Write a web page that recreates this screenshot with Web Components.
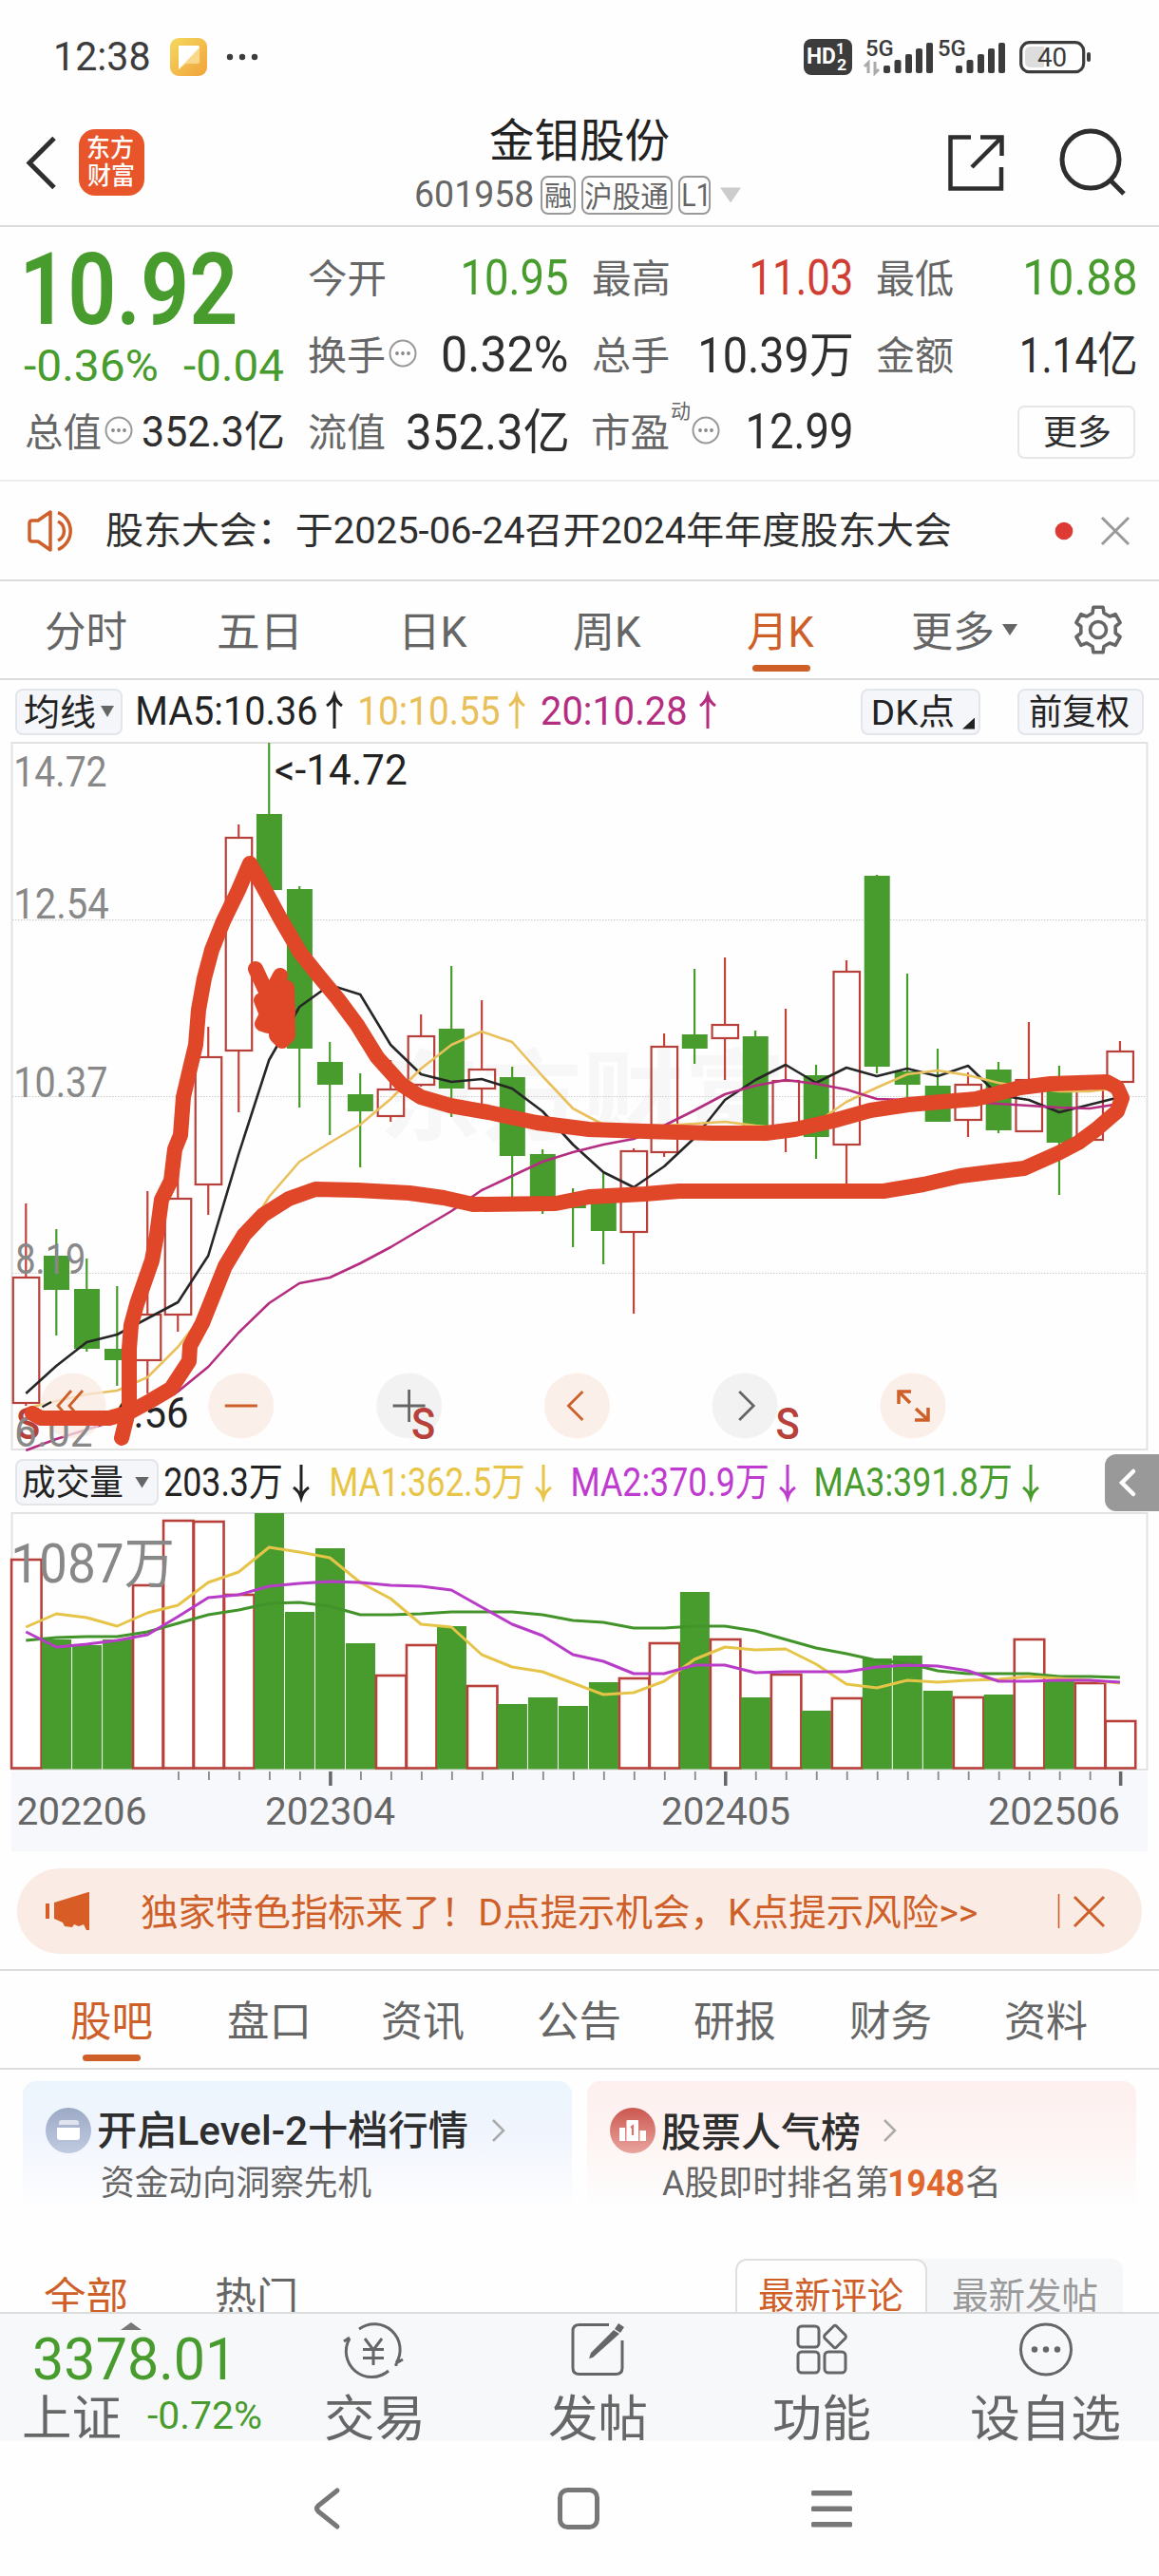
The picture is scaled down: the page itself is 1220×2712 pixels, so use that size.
<!DOCTYPE html>
<html lang="zh-CN">
<head>
<meta charset="utf-8">
<title>金钼股份 601958</title>
<style>
html,body{margin:0;padding:0;background:#fefefe}
body{width:1220px;height:2712px;overflow:hidden;font-family:Roboto,"Noto Sans CJK SC",sans-serif;color:#2e2e2e}
</style>
</head>
<body>
<stock-page></stock-page>
<script>
const FAMILY = 'Roboto,"Noto Sans CJK SC",sans-serif';
const GREEN = '#479c2d', RED = '#b8403a', ORANGE = '#cf5f28', PEN = '#e04628';
const pen = document.createElement('canvas').getContext('2d');

/* Ink extents of a string, and the horizontal scale that makes it w pixels wide. */
function fit(text, size, weight, w) {
  pen.font = `${weight} ${size}px ${FAMILY}`;
  const m = pen.measureText(text);
  const ink = m.actualBoundingBoxLeft + m.actualBoundingBoxRight;
  const s = w ? w / ink : 1;
  return { s, dx: m.actualBoundingBoxLeft * s, w: w || ink };
}
function svgText(text, x, base, size, w, fill, weight = 400) {
  const f = fit(text, size, weight, w);
  return `<text transform="translate(${x + f.dx} ${base}) scale(${f.s} 1)" font-size="${size}" font-weight="${weight}" fill="${fill}">${text.replace(/</g, '&lt;')}</text>`;
}
function define(name, css, html) {
  customElements.define(name, class extends HTMLElement {
    connectedCallback() {
      if (this.shadowRoot) return;
      const root = this.attachShadow({ mode: 'open' });
      root.innerHTML = `<style>:host{display:block;box-sizing:border-box}*{box-sizing:border-box}svg{display:block;flex:none;overflow:visible}${css}</style>` + (typeof html === 'function' ? html(this) : html);
    }
  });
}

/* Text condensed to a set width: w, size, weight, m (left margin), c (colour).
   Han glyphs sit a little high on the Roboto baseline box, so they are nudged down. */
customElements.define('fit-text', class extends HTMLElement {
  connectedCallback() {
    if (this.shadowRoot) return;
    const a = n => this.getAttribute(n);
    const size = +a('size'), weight = a('weight') || 400, text = this.textContent;
    const f = fit(text, size, weight, +a('w'));
    const drop = !/[\u4e00-\u9fff]/.test(text) ? 0 : /\d/.test(text) ? .02 : .06;
    this.attachShadow({ mode: 'open' }).innerHTML = `<style>
      :host{display:block;flex:none;white-space:nowrap;width:${f.w}px;height:${size * 1.2}px;line-height:${size * 1.2}px;
        font-size:${size}px;font-weight:${weight};margin-left:${a('m') || 0}px;${a('c') ? 'color:' + a('c') : ''}}
      span{display:inline-block;transform-origin:0 50%;transform:translate(${f.dx}px,${drop}em) scaleX(${f.s})}
    </style><span><slot></slot></span>`;
  }
});

define('info-dot', ':host{flex:none;width:30px;height:30px}', `<svg width="30" height="30" fill="none" stroke="#999" stroke-width="2"><circle cx="15" cy="15" r="13.5"/><g fill="#888" stroke="none"><circle cx="9" cy="15" r="1.9"/><circle cx="15" cy="15" r="1.9"/><circle cx="21" cy="15" r="1.9"/></g></svg>`);

define('tri-down', ':host{flex:none;width:var(--tw,14px);height:var(--th,12px);background:var(--tc,#666);clip-path:polygon(0 0,100% 0,50% 100%)}', '');

define('ma-arrow', ':host{flex:none}', el => {
  const up = el.hasAttribute('up');
  return `<svg width="20" height="38" fill="none" stroke="currentColor" stroke-width="3" ${up ? '' : 'style="transform:rotate(180deg)"'}><path d="M10 37V3M2 13Q8 9 10 2Q12 9 18 13"/></svg>`;
});

const bars = () => [[0, 8], [11.5, 14], [23, 20], [34, 26], [45, 32]].map(([x, h]) => `<rect x="${x}" y="${32 - h}" width="7" height="${h}" rx="2"/>`).join('');
define('status-bar', `:host{height:100px;padding:20px 71px 0 59px;display:flex;align-items:center;color:#3c3c3c}
  .gap{flex:1}.note{margin-left:22px}.hd{width:51px;height:38px;border-radius:8px;background:#3c3c3c;color:#fff;display:flex;align-items:center;padding-left:4px}
  .hd div{display:flex;flex-direction:column;margin-left:2px}`,
  `<fit-text w="98" size="42">12:38</fit-text>
  <svg class="note" width="40" height="40"><defs><linearGradient id="g" x2="1" y2="1"><stop offset="0" stop-color="#f4da5c"/><stop offset="1" stop-color="#f0a23c"/></linearGradient></defs><rect width="39" height="40" rx="9" fill="url(#g)"/><path d="M9 8H29Q31 8 31 10V25Q31 27 29 27H17L9 33Z" fill="#f9d88c"/><path d="M9 8H29Q31 8 31 10L9 33Z" fill="#fff"/></svg>
  <svg style="margin-left:18px" width="38" height="8" fill="#3c3c3c"><circle cx="5" cy="4" r="3.2"/><circle cx="18" cy="4" r="3.2"/><circle cx="31" cy="4" r="3.2"/></svg>
  <span class="gap"></span>
  <div class="hd"><fit-text w="29" size="23" weight="700">HD</fit-text><div><fit-text w="6" size="16" weight="700">1</fit-text><fit-text w="10" size="16" weight="700" style="margin-top:-3px">2</fit-text></div></div>
  <svg style="margin-left:13px" width="147" height="38" fill="#3c3c3c" font-family="Roboto" font-weight="500">
    ${svgText('5G', 2, 18, 23, 28, '#3c3c3c', 500)}${svgText('5G', 78, 18, 23, 28, '#3c3c3c', 500)}
    <g transform="translate(20 4)">${bars()}</g><g transform="translate(96 4)">${bars()}</g>
    <path d="M4 36V25L0 29M11 24V36L15 32" fill="none" stroke="#aaa" stroke-width="3"/></svg>
  <svg style="margin-left:16px" width="76" height="36"><rect x="1.7" y="2.7" width="66" height="31" rx="9" fill="none" stroke="#3c3c3c" stroke-width="3.2"/><path d="M12 7H26V29H12Q6 29 6 23V13Q6 7 12 7Z" fill="#ddd"/><rect x="71" y="13" width="4" height="10" rx="2" fill="#3c3c3c"/><g font-family="Roboto">${svgText('40', 19, 28, 27, 30, '#3c3c3c')}</g></svg>`);

define('boxed-tag', ':host{flex:none;height:41px;border:2px solid #999;border-radius:8px;display:flex;align-items:center;justify-content:center;width:var(--w);margin-left:6px;color:#666}', '<slot></slot>');

define('title-bar', `:host{height:139px;border-bottom:2px solid #dcdcdc;display:grid;grid-template-columns:438px 1fr 222px}
  .l,.r{display:flex;padding-top:36px;align-items:flex-start}.l{padding-left:26px}
  .logo{width:69px;height:70px;border-radius:17px;background:#e9552a;color:#fff;margin-left:23px;padding:3px 0 0 9px}
  .m{padding-top:17px}.sub{display:flex;align-items:center;margin-top:8px;color:#666}`,
  `<div class="l"><svg width="34" height="72" fill="none" stroke="#2e2e2e" stroke-width="5"><path d="M31 9.5 5 35.5 31 61.5"/></svg>
    <div class="logo"><fit-text w="48" size="26" weight="500">东方</fit-text><fit-text w="49" size="26" weight="500" style="margin-top:-2px">财富</fit-text></div></div>
  <div class="m"><fit-text m="78" w="188" size="48" c="#222">金钼股份</fit-text>
    <div class="sub"><fit-text w="123" size="38">601958</fit-text><boxed-tag style="--w:37px;margin-left:8px"><fit-text w="27" size="29">融</fit-text></boxed-tag><boxed-tag style="--w:96px"><fit-text w="88" size="31">沪股通</fit-text></boxed-tag><boxed-tag style="--w:34px"><fit-text w="24" size="33">L1</fit-text></boxed-tag><tri-down style="--tw:22px;--th:16px;--tc:#ccc;margin-left:10px"></tri-down></div></div>
  <div class="r"><svg width="62" height="72" fill="none" stroke="#2e2e2e" stroke-width="4.5"><path d="M24 8.5H2.500V62.500H56V40M34 8.500H56.500V28M56 9 25 40"/></svg>
    <svg style="margin-left:56px" width="72" height="72" fill="none" stroke="#2e2e2e" stroke-width="5"><circle cx="32" cy="32" r="30"/><path d="M52 53 67 68"/></svg></div>`);

define('quote-panel', `:host{height:268px;border-bottom:2px solid #ececec;padding:13px 24px 0 25px;display:grid;grid-template-columns:273px 272px 272px 272px;column-gap:27px;grid-template-rows:81px 81px 81px}
  div{display:flex;align-items:center;white-space:nowrap}
  .more{margin-left:auto;width:124px;height:56px;border:2px solid #e6e6e6;border-radius:7px;justify-content:center}`,
  (() => {
    const lab = t => `<fit-text w="80" size="41" c="#666">${t}</fit-text>`;
    const val = (t, w, c = '#2e2e2e', size = 51) => `<fit-text style="margin-left:auto" w="${w}" size="${size}" c="${c}">${t}</fit-text>`;
    return `<div style="padding-top:26px"><fit-text m="2" w="220" size="105" weight="600" c="${GREEN}">10.92</fit-text></div>
    <div>${lab('今开')}${val('10.95', 109, GREEN)}</div><div>${lab('最高')}${val('11.03', 104, '#cf3d33')}</div><div>${lab('最低')}${val('10.88', 115, GREEN)}</div>
    <div style="padding-top:25px"><fit-text w="140" size="46" c="${GREEN}">-0.36%</fit-text>${val('-0.04', 105, GREEN, 46)}</div>
    <div>${lab('换手')}<info-dot style="margin:-4px 0 0 4px"></info-dot>${val('0.32%', 131)}</div><div>${lab('总手')}${val('10.39万', 158)}</div><div>${lab('金额')}${val('1.14亿', 119)}</div>
    <div><fit-text m="2" w="79" size="41" c="#666">总值</fit-text><info-dot style="margin:-4px 0 0 4px"></info-dot>${val('352.3亿', 147, '#2e2e2e', 44)}</div>
    <div>${lab('流值')}${val('352.3亿', 168)}</div>
    <div>${lab('市盈')}<fit-text m="3" w="19" size="21" c="#666" style="margin-top:-44px">动</fit-text><info-dot style="margin:-4px 0 0 2px"></info-dot>${val('12.99', 108)}</div>
    <div><div class="more"><fit-text w="69" size="36">更多</fit-text></div></div>`;
  })());

define('notice-bar', ':host{height:105px;border-bottom:2px solid #dcdcdc;display:flex;align-items:center;padding:0 29px}',
  `<svg width="52" height="46" fill="none" stroke="${ORANGE}" stroke-width="3.5"><path d="M24 3V43L11 34H5Q2 34 2 31V15Q2 12 5 12H11ZM32 3.500A21 21 0 0 1 32 42.500M32 13A11 11 0 0 1 32 33" stroke-linejoin="round"/></svg>
  <fit-text m="31" w="889" size="39">股东大会：于2025-06-24召开2024年年度股东大会</fit-text>
  <svg style="margin-left:109px" width="20" height="20" fill="#dc3a32"><circle cx="10" cy="10" r="9.300"/></svg>
  <svg style="margin-left:29px" width="30" height="30" stroke="#999" stroke-width="3"><path d="M1 1 29 29M29 1 1 29"/></svg>`);

define('tab-item', `:host{position:relative;color:#666;height:100%;display:flex;align-items:center}:host([on]){color:${ORANGE}}
  :host([on])::after{content:"";position:absolute;left:50%;bottom:7px;width:61px;height:7px;border-radius:4px;margin-left:-30.5px;background:${ORANGE}}`, '<slot></slot>');

const gear = (() => {
  let d = '';
  for (let i = 0; i < 6; i++) {
    const a = i * 60 - 90, p = (r, t) => `${(26 + r * Math.cos((a + t) * Math.PI / 180)).toFixed(1)} ${(26 + r * Math.sin((a + t) * Math.PI / 180)).toFixed(1)}`;
    d += `${i ? 'L' : 'M'}${p(18.5, -19)}L${p(24.3, -12)}L${p(24.3, 12)}L${p(18.5, 19)}`;
  }
  return d + 'Z';
})();
define('period-tabs', ':host{height:104px;border-bottom:2px solid #dcdcdc;display:flex;align-items:center;padding-left:48px}',
  `<tab-item><fit-text w="85" size="44">分时</fit-text></tab-item><tab-item style="margin-left:97px"><fit-text w="82" size="44">五日</fit-text></tab-item>
  <tab-item style="margin-left:114px"><fit-text w="66" size="44">日K</fit-text></tab-item><tab-item style="margin-left:112px"><fit-text w="71" size="44">周K</fit-text></tab-item>
  <tab-item on style="margin-left:112px"><fit-text w="70" size="44">月K</fit-text></tab-item><tab-item style="margin-left:104px"><fit-text w="84" size="44">更多</fit-text><tri-down style="--tw:16px;--th:12px;margin-left:10px"></tri-down></tab-item>
  <svg style="margin-left:59px" width="52" height="52" fill="none" stroke="#666" stroke-width="3.6" stroke-linejoin="round"><path d="${gear}"/><circle cx="26" cy="26" r="8.5"/></svg>`);

define('chip-button', ':host{flex:none;position:relative;width:var(--w);height:49px;border:2px solid #e2e5ea;border-radius:8px;background:#f5f6f9;display:flex;align-items:center;padding-left:var(--p,8px);color:#222}', '<slot></slot>');

define('ma-row', ':host{height:62px;display:flex;align-items:center;padding:4px 16px 0 16px;color:#222}div{display:flex;align-items:center}ma-arrow{margin-left:9px}i{position:absolute;right:4px;bottom:4px;width:13px;height:12px;background:#222;clip-path:polygon(100% 0,100% 100%,0 100%)}',
  `<chip-button style="--w:113px"><fit-text w="74" size="38">均线</fit-text><tri-down style="margin-left:6px"></tri-down></chip-button>
  <div><fit-text m="16" w="188" size="42">MA5:10.36</fit-text><ma-arrow up></ma-arrow></div>
  <div style="color:#e9bf5a"><fit-text m="17" w="146" size="42">10:10.55</fit-text><ma-arrow up></ma-arrow></div>
  <div style="color:#b42d80"><fit-text m="16" w="152" size="42">20:10.28</fit-text><ma-arrow up style="margin-left:13px"></ma-arrow></div>
  <chip-button style="--w:126px;--p:12px;margin-left:auto"><fit-text w="84" size="37">DK点</fit-text><i></i></chip-button>
  <chip-button style="--w:133px;--p:11px;margin-left:39px"><fit-text w="104" size="37">前复权</fit-text></chip-button>`);

const cx = i => 27.3 + i * 31.99;
const line = (ys, c, w = 2.6) => `<polyline fill="none" stroke="${c}" stroke-width="${w}" stroke-linejoin="round" points="${ys.map((y, i) => cx(i).toFixed(1) + ',' + y).join(' ')}"/>`;

/* [up?, high, top, bottom, low] */
const candles = [
  [1,1267,1345,1477,1480],[0,1294,1322,1358,1406],[0,1325,1357,1420,1423],[0,1354,1420,1432,1459],[1,1254,1384,1432,1467],[1,1200,1262,1384,1402],
  [1,1081,1113,1247,1279],[1,868,882,1106,1171],[0,782,857,937,937],[0,933,936,1104,1166],[0,1097,1118,1142,1195],[0,1130,1152,1170,1229],
  [1,1116,1147,1175,1181],[1,1068,1091,1142,1144],[0,1017,1083,1146,1176],[1,1053,1126,1146,1166],[0,1123,1134,1217,1262],[0,1210,1215,1265,1278],
  [0,1251,1260,1272,1313],[0,1235,1262,1296,1331],[1,1209,1212,1297,1383],[1,1088,1102,1213,1218],[0,1020,1089,1104,1120],[1,1008,1079,1093,1137],
  [0,1085,1091,1190,1190],[1,1062,1138,1190,1213],[0,1121,1132,1197,1220],[1,1011,1023,1205,1248],[0,921,922,1123,1130],[0,1025,1128,1142,1158],
  [0,1104,1143,1181,1181],[1,1129,1142,1179,1197],[0,1118,1126,1190,1193],[1,1076,1137,1191,1191],[0,1122,1147,1203,1258],[1,1140,1145,1200,1200],[1,1096,1107,1139,1139]];
const ma5 = [1467,1438,1413,1405,1388,1371,1322,1215,1116,1060,1037,1047,1100,1131,1139,1136,1146,1170,1205,1234,1250,1228,1198,1158,1137,1121,1140,1124,1133,1125,1133,1122,1153,1158,1171,1163,1155];
const ma10 = [1483,1475,1468,1464,1450,1418,1377,1312,1260,1223,1203,1184,1157,1125,1100,1086,1097,1133,1167,1184,1190,1185,1183,1181,1185,1188,1182,1160,1145,1131,1127,1132,1140,1145,1149,1149,1145];
const ma20 = [1527,1515,1505,1495,1482,1465,1439,1403,1372,1351,1345,1330,1313,1294,1275,1253,1238,1223,1213,1205,1199,1185,1169,1152,1143,1137,1141,1147,1157,1158,1159,1160,1162,1164,1166,1167,1162];
const sketch = '128,1514 136,1482 136,1420 138,1395 144,1373 160,1327 165,1300 170,1263 180,1243 184,1210 190,1195 193,1155 200,1125 206,1100 209,1063 215,1030 223,1000 235,970 251,937 263,909 275,930 295,967 316,1003 336,1028 356,1052 376,1079 397,1113 423,1142 443,1155 474,1164 514,1171 565,1182 620,1189 679,1191 750,1193 806,1193 837,1189 877,1180 916,1169 956,1163 1027,1157 1074,1145 1106,1141 1165,1139 1176,1145 1181,1156 1176,1170 1154,1189 1135,1203 1114,1214 1078,1230 1043,1234 1011,1238 972,1247 930,1254 869,1254 715,1254 679,1257 620,1260 585,1267 498,1268 467,1261 431,1256 376,1253 332,1252 304,1262 277,1279 257,1300 237,1333 225,1363 213,1393 200,1417 199,1433 180,1462 158,1475 136,1487 115,1493 43,1493 34,1488';
const scribble = '269,1020 283,1050 275,1053 281,1068 276,1078 282,1080 288,1060 285,1046 295,1027 290,1062 303,1067 302,1040 303,1090 297,1096 291,1090 291,1070 298,1062 284,1074 296,1082';
const round = (i, warm, art) => `<g transform="translate(${77 + i * 176.8} 1480)"><circle r="34.5" fill="${warm ? '#fae9e1' : '#eeeeee'}" fill-opacity=".75"/><g fill="none" stroke="${warm ? ORANGE : '#666'}" stroke-width="2.8">${art}</g></g>`;

define('kline-chart', ':host{height:752px}text{font-family:Roboto,"Noto Sans CJK SC",sans-serif}',
  () => `<svg width="1220" height="752" viewBox="0 778 1220 752">
  <g>${svgText('东方财富', 405, 1193, 104, 415, '#f7f7f7', 700)}</g>
  <rect x="12.500" y="782" width="1195" height="744" fill="none" stroke="#e2e2e2" stroke-width="2"/>
  <path d="M13 968.500H1207M13 1154.500H1207M13 1340.500H1207" stroke="#ccc" stroke-width="1" stroke-dasharray="1.500 1.500"/>
  ${candles.map(([up, h, t, b, l], i) => up
    ? `<path d="M${cx(i)} ${h}V${t}M${cx(i)} ${b}V${l}" stroke="#c2433c" stroke-width="2.200"/><rect x="${cx(i) - 13.5}" y="${t}" width="27.500" height="${b - t}" fill="none" stroke="${RED}" stroke-width="2.200"/>`
    : `<path d="M${cx(i)} ${h}V${l}" stroke="${GREEN}" stroke-width="2.200"/><rect x="${cx(i) - 13.3}" y="${t}" width="27" height="${b - t}" fill="${GREEN}"/>`).join('')}
  ${line(ma5, '#262626')}${line(ma10, '#e9c05c')}${line(ma20, '#b42d80')}
  ${svgText('14.72', 17, 828, 44, 95, '#888')}${svgText('12.54', 17, 967, 44, 97, '#888')}${svgText('10.37', 17, 1155, 44, 95, '#888')}${svgText('8.19', 18, 1341, 44, 70, '#888')}
  ${svgText('<-14.72', 290, 826, 44, 138, '#222')}
  ${round(0, 1, '<path d="M-2 -16 -16 0 -2 16M10 -16 -4 0 10 16"/>')}${round(1, 1, '<path d="M-17 0H17"/>')}${round(2, 0, '<path d="M-17 0H17M0 -17V17"/>')}
  ${round(3, 1, '<path d="M6 -15 -9 0 6 15"/>')}${round(4, 0, '<path d="M-6 -15 9 0 -6 15"/>')}${round(5, 1, '<path d="M-15 -2V-15H-2M-15 -15 -3 -3M16 2V15H2M16 15 3 3" stroke-width="3.500"/>')}
  <path d="M27 1491 54 1476M62 1486H118" stroke="#222" stroke-width="2.200" stroke-dasharray="16 4"/>${svgText('4.56', 118, 1503, 44, 79, '#222')}
  ${[18, 434, 817.5].map(x => svgText('S', x, 1514.5, 46, 23.5, RED, 500)).join('')}
  ${svgText('6.02', 17, 1523, 44, 80, '#888')}
  <g fill="none" stroke="${PEN}" stroke-width="16" stroke-linejoin="round" stroke-linecap="round"><polyline points="${sketch}"/><polyline points="${scribble}"/></g></svg>`);

define('volume-row', ':host{height:61px;display:flex;align-items:center;padding-left:16px;color:#222}div{display:flex;align-items:center}ma-arrow{margin-left:11px}.fold{margin-left:auto;width:57px;height:60px;border-radius:12px 0 0 12px;background:#999}',
  `<chip-button style="--w:151px;--p:6px"><fit-text w="105" size="37">成交量</fit-text><tri-down style="--tw:15px;margin-left:13px"></tri-down></chip-button>
  <div><fit-text m="6" w="123" size="42">203.3万</fit-text><ma-arrow></ma-arrow></div>
  <div style="color:#e8c547"><fit-text m="22" w="202" size="42">MA1:362.5万</fit-text><ma-arrow></ma-arrow></div>
  <div style="color:#bf3bcf"><fit-text m="21" w="205" size="42">MA2:370.9万</fit-text><ma-arrow></ma-arrow></div>
  <div style="color:${GREEN}"><fit-text m="20" w="205" size="42">MA3:391.8万</fit-text><ma-arrow></ma-arrow></div>
  <svg class="fold" viewBox="0 0 57 60" fill="none" stroke="#fff" stroke-width="4.500" stroke-linecap="round"><path d="M30 18 18 30 30 42"/></svg>`);

const UP = new Set([0, 4, 5, 6, 7, 12, 13, 15, 20, 21, 23, 25, 27, 31, 33, 35, 36]);
const vol = [1642,1726,1732,1726,1669,1601,1602,1679,1593,1697,1630,1730,1764,1732,1712,1775,1794,1787,1796,1771,1767,1730,1676,1726,1787,1763,1801,1788,1746,1743,1780,1787,1784,1726,1770,1772,1812];
const v1 = [1713,1699,1703,1712,1698,1690,1666,1655,1629,1634,1640,1666,1683,1710,1713,1742,1755,1760,1772,1784,1782,1770,1747,1734,1737,1736,1752,1773,1777,1769,1771,1769,1768,1765,1767,1769,1772];
const v2 = [1718,1734,1731,1727,1721,1702,1682,1679,1670,1667,1665,1666,1669,1670,1674,1692,1710,1722,1742,1749,1762,1762,1753,1753,1761,1760,1760,1760,1755,1753,1754,1759,1770,1770,1769,1769,1771];
const v3 = [1727,1724,1723,1723,1718,1709,1700,1695,1688,1687,1691,1700,1700,1699,1697,1697,1697,1700,1706,1708,1714,1714,1712,1712,1717,1726,1735,1741,1748,1751,1759,1762,1762,1762,1765,1765,1766];
define('volume-chart', ':host{height:358px}text{font-family:Roboto,"Noto Sans CJK SC",sans-serif}',
  () => `<svg width="1220" height="358" viewBox="0 1591 1220 358">
  <rect x="12" y="1865" width="1196" height="84" fill="#f7f8fb"/><rect x="12.500" y="1593" width="1195" height="270" fill="none" stroke="#e2e2e2" stroke-width="2"/>
  ${vol.map((y, i) => UP.has(i)
    ? `<rect x="${cx(i) - 15.2}" y="${y}" width="31.500" height="${1861.5 - y}" fill="#fff" stroke="${RED}" stroke-width="2.600"/>`
    : `<rect x="${cx(i) - 15.2}" y="${y}" width="31" height="${1862.5 - y}" fill="${GREEN}"/>`).join('')}
  ${line(v3, '#42942a', 3)}${line(v1, '#e6c448', 3)}${line(v2, '#b83cc8', 3)}
  ${Array.from({ length: 32 }, (_, k) => k + 5).map(i => { const big = [10, 23, 36].includes(i); return `<path d="M${cx(i) + .7} 1865V${big ? 1880 : 1874}" stroke="${big ? '#666' : '#888'}" stroke-width="${big ? 3.5 : 1.8}"/>`; }).join('')}
  ${svgText('1087万', 15, 1666, 57, 166, '#888')}
  ${svgText('202206', 18.5, 1921, 41, 135, '#666')}${svgText('202304', 280, 1921, 41, 136, '#666')}${svgText('202405', 697, 1921, 41, 134, '#666')}${svgText('202506', 1041, 1921, 41, 137, '#666')}</svg>`);

define('promo-banner', `:host{height:126px;border-bottom:2px solid #dcdcdc;padding:18px 18px 0;color:${ORANGE}}div{height:90px;border-radius:45px;background:#faece4;display:flex;align-items:center;padding-left:30px}`,
  `<div><svg width="47" height="40" fill="#d75c26"><path d="M9 11 45 0H46V40H43L40 34 35 36 30 34 28 37 20 36 18 32 9 28ZM0 12H4V28H0Z"/></svg>
  <fit-text m="54" w="879" size="39">独家特色指标来了！D点提示机会，K点提示风险&gt;&gt;</fit-text>
  <svg style="margin-left:85px" width="52" height="38" fill="none" stroke="${ORANGE}" stroke-width="3"><path d="M1.500 1V37" stroke-width="1.600"/><path d="M18 4 49 35M49 4 18 35"/></svg></div>`);

define('content-tabs', ':host{height:104px;border-bottom:2px solid #dcdcdc;display:grid;grid-template-columns:repeat(7,163.9px);padding-left:36px;justify-items:center}',
  ['股吧', '盘口', '资讯', '公告', '研报', '财务', '资料'].map((t, i) => `<tab-item ${i ? '' : 'on'}><fit-text w="${i === 1 ? 83 : 85}" size="44">${t}</fit-text></tab-item>`).join(''));

define('promo-card', `:host{flex:1;height:150px;border-radius:14px 14px 0 0;background:linear-gradient(var(--bg),var(--bg2) 60px,#fefefe 135px);padding:26px 0 0 24px}
  .t,.s{display:flex;align-items:center}.t{height:52px}.s{height:42px;margin-top:8px;padding-left:57px;color:#666}svg.c{margin-left:26px}`,
  `<div class="t"><slot name="icon"></slot><slot name="title"></slot><svg class="c" width="14" height="24" fill="none" stroke="#aaa" stroke-width="2.500"><path d="M1 1 12 12 1 23"/></svg></div><div class="s"><slot></slot></div>`);

define('promo-cards', ':host{height:161px;padding:12px 24px 0;display:flex;gap:16px}',
  `<promo-card style="--bg:#ecf5fd;--bg2:#f1f5fd"><svg slot="icon" width="48" height="48"><defs><linearGradient id="b" x2="0" y2="1"><stop offset="0" stop-color="#9daac6"/><stop offset="1" stop-color="#c0cae0"/></linearGradient></defs><circle cx="24" cy="24" r="24" fill="url(#b)"/><path d="M14 18V16Q14 13 17 13H32Q35 13 35 16V18Z" fill="#dfe4ee"/><path d="M12 21H36V31Q36 34 33 34H15Q12 34 12 31Z" fill="#fff"/></svg>
    <fit-text slot="title" m="8" w="388" size="42" weight="500">开启Level-2十档行情</fit-text><fit-text m="2" w="284" size="36">资金动向洞察先机</fit-text></promo-card>
  <promo-card style="--bg:#fdf0ef;--bg2:#fdf4f3"><svg slot="icon" width="48" height="48"><defs><linearGradient id="r" x2="0" y2="1"><stop offset="0" stop-color="#cb5850"/><stop offset="1" stop-color="#e9a49e"/></linearGradient></defs><circle cx="24" cy="24" r="24" fill="url(#r)"/><path d="M10 21H16V35H10ZM17.500 14Q17.500 13 18.500 13H29Q30 13 30 14V35H17.500ZM31.500 24H38V35H31.500Z" fill="#fff"/><path d="M22 21 24 19.500V29" fill="none" stroke="#d8746c" stroke-width="2.200"/></svg>
    <fit-text slot="title" m="7" w="207" size="42" weight="500">股票人气榜</fit-text><fit-text w="238" size="36" m="-2">A股即时排名第</fit-text><fit-text m="2" w="78" size="38" weight="700" c="#e0672e" style="margin-top:3px">1948</fit-text><fit-text m="2" w="32" size="36">名</fit-text></promo-card>`);

define('post-filter', `:host{height:94px;overflow:hidden;padding:38px 38px 0 47px;display:flex;align-items:flex-start;color:#666}.seg{margin-left:auto;display:flex;height:80px;background:#f6f7f9;border-radius:12px}
  .on{width:202px;border:2px solid #dfdfdf;border-radius:12px;background:#fefefe;padding:13px 0 0 23px}.off{width:206px;padding:15px 0 0 27px}`,
  `<fit-text w="86" size="43" c="${ORANGE}" style="margin-top:13px">全部</fit-text><fit-text m="94" w="84" size="43" style="margin-top:13px">热门</fit-text>
  <div class="seg"><div class="on"><fit-text w="152" size="38" c="${ORANGE}">最新评论</fit-text></div><div class="off"><fit-text w="152" size="38" c="#999">最新发帖</fit-text></div></div>`);

define('dock-item', ':host{display:flex;flex-direction:column;align-items:center;color:#666;padding-top:8px;width:236px}slot{display:block}div{margin-top:10px}', '<slot name="i"></slot><div><slot></slot></div>');
define('bottom-dock', `:host{height:136px;overflow:hidden;border-top:2px solid #dcdcdc;background:#f7f8fa;display:flex;color:#666}.idx{width:275px;flex:none;padding-top:9px}
  .idx svg{margin-left:127px}.row{display:flex;align-items:center;margin-top:-8px}`,
  `<div class="idx"><svg width="22" height="8" fill="#777"><path d="M0 8 11 0 22 8Z"/></svg><fit-text m="36" w="202" size="62" c="${GREEN}" style="margin-top:-6px">3378.01</fit-text>
    <div class="row"><fit-text m="25" w="102" size="51">上证</fit-text><fit-text m="28" w="120" size="41" c="${GREEN}">-0.72%</fit-text></div></div>
  <dock-item><svg slot="i" width="68" height="60" fill="none" stroke="#666" stroke-width="3"><path d="M19 8A27 27 0 0 1 58 44M50 52A27 27 0 0 1 9 18M3 21 9 17M58 44 65 40M58 44V47M25 18 34 30 43 18M34 30V46M23 29.500H45M23 38.500H45"/></svg><fit-text w="100" size="52">交易</fit-text></dock-item>
  <dock-item><svg slot="i" width="60" height="60" fill="none" stroke="#666" stroke-width="3"><path d="M42 3.500H11Q4 3.500 4 10V49Q4 55.500 11 55.500H49Q56 55.500 56 49V20"/><path d="M52 2 58 6 54 12 48 8ZM47 9 53 13 25 38 21 39 23 33Z" fill="#666" stroke="none"/></svg><fit-text w="102" size="52">发帖</fit-text></dock-item>
  <dock-item><svg slot="i" width="56" height="60" fill="none" stroke="#666" stroke-width="3"><rect x="3" y="5" width="22" height="22" rx="4"/><rect x="3" y="32" width="22" height="22" rx="4"/><rect x="31" y="32" width="22" height="22" rx="4"/><path d="M40.500 5Q42 3.500 43.500 5L53 14.500Q54 16 53 17.500L43.500 27Q42 28.500 40.500 27L31 17.500Q30 16 31 14.500Z"/></svg><fit-text w="102" size="52">功能</fit-text></dock-item>
  <dock-item><svg slot="i" width="60" height="60" fill="none" stroke="#666" stroke-width="3"><circle cx="30" cy="29.500" r="26.500"/><g fill="#666" stroke="none"><circle cx="18" cy="29.500" r="3.200"/><circle cx="30" cy="29.500" r="3.200"/><circle cx="42" cy="29.500" r="3.200"/></g></svg><fit-text w="156" size="52">设自选</fit-text></dock-item>`);

define('system-nav', ':host{height:142px;display:flex;align-items:center;padding-left:329px}',
  `<svg width="30" height="46" fill="none" stroke="#777" stroke-width="5" stroke-linecap="round" stroke-linejoin="round"><path d="M26 4 6 20Q3 23 6 26L26 42"/></svg>
  <svg style="margin-left:227px" width="46" height="46" fill="none" stroke="#777" stroke-width="5"><rect x="3.500" y="3.500" width="39" height="39" rx="8"/></svg>
  <svg style="margin-left:222px" width="44" height="46" fill="#777"><rect y="4" width="43" height="5.500" rx="1.500"/><rect y="20.500" width="43" height="5.500" rx="1.500"/><rect y="37" width="43" height="5.500" rx="1.500"/></svg>`);

define('stock-page', ':host{width:1220px;height:2712px;overflow:hidden;background:#fefefe}',
  ['status-bar', 'title-bar', 'quote-panel', 'notice-bar', 'period-tabs', 'ma-row', 'kline-chart', 'volume-row', 'volume-chart', 'promo-banner', 'content-tabs', 'promo-cards', 'post-filter', 'bottom-dock', 'system-nav'].map(n => `<${n}></${n}>`).join(''));
</script>
</body>
</html>
